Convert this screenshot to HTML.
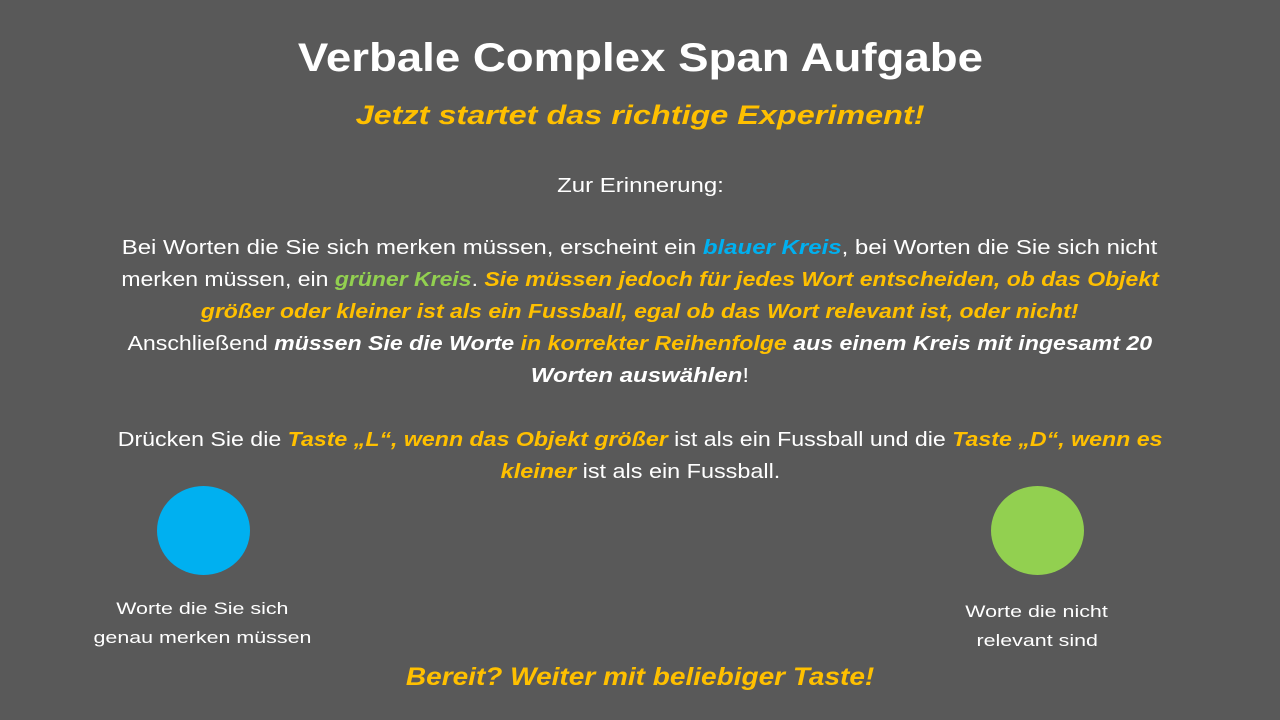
<!DOCTYPE html>
<html><head><meta charset="utf-8"><style>
body{margin:0;width:1280px;height:720px;background:#595959;overflow:hidden;font-family:"Liberation Sans",sans-serif;color:#fff;position:relative}
.l{position:absolute;left:0;width:1280px;text-align:center;white-space:nowrap}
.l>span{display:inline-block;transform-origin:center}
.b{font-size:20px;line-height:32px}
.b>span{transform:scaleX(1.2)}
.o{color:#FFC000}.bl{color:#00B0F0}.g{color:#92D050}
i{font-style:italic}b{font-weight:bold}
.c{position:absolute;border-radius:50%}
.s{position:absolute;text-align:center;font-size:17px;line-height:29px;white-space:nowrap}
.s>span{display:inline-block;transform:scaleX(1.26)}
</style></head><body>
<div class="l" style="top:32px;font-size:40px;font-weight:bold;line-height:52px"><span style="transform:scaleX(1.14)">Verbale Complex Span Aufgabe</span></div>
<div class="l o" style="top:96px;font-size:27px;font-weight:bold;font-style:italic;line-height:38px"><span style="transform:scaleX(1.2)">Jetzt startet das richtige Experiment!</span></div>
<div class="l b" style="top:170px"><span>Zur Erinnerung:</span></div>
<div class="l b" style="top:232px"><span>Bei Worten die Sie sich merken müssen, erscheint ein <b><i class="bl">blauer Kreis</i></b>, bei Worten die Sie sich nicht</span></div>
<div class="l b" style="top:264px"><span style="transform:scaleX(1.15)">merken müssen, ein <b><i class="g">grüner Kreis</i></b>. <b><i class="o">Sie müssen jedoch für jedes Wort entscheiden, ob das Objekt</i></b></span></div>
<div class="l b" style="top:296px"><span style="transform:scaleX(1.15)"><b><i class="o">größer oder kleiner ist als ein Fussball, egal ob das Wort relevant ist, oder nicht!</i></b></span></div>
<div class="l b" style="top:328px"><span style="transform:scaleX(1.157)">Anschließend <b><i>müssen Sie die Worte</i></b> <b><i class="o">in korrekter Reihenfolge</i></b> <b><i>aus einem Kreis mit ingesamt 20</i></b></span></div>
<div class="l b" style="top:360px"><span><b><i>Worten auswählen</i></b>!</span></div>
<div class="l b" style="top:424px"><span style="transform:scaleX(1.158)">Drücken Sie die <b><i class="o">Taste „L“, wenn das Objekt größer</i></b> ist als ein Fussball und die <b><i class="o">Taste „D“, wenn es</i></b></span></div>
<div class="l b" style="top:456px"><span style="transform:scaleX(1.17)"><b><i class="o">kleiner</i></b> ist als ein Fussball.</span></div>
<div class="c" style="left:157px;top:486px;width:93px;height:89px;background:#00B0F0"></div>
<div class="c" style="left:991px;top:486px;width:93px;height:89px;background:#92D050"></div>
<div class="s" style="left:72px;width:260px;top:594px"><span>Worte die Sie sich</span><br><span>genau merken müssen</span></div>
<div class="s" style="left:907px;width:260px;top:597px"><span>Worte die nicht</span><br><span>relevant sind</span></div>
<div class="l o" style="top:660px;font-size:25px;font-weight:bold;font-style:italic;line-height:34px"><span style="transform:scaleX(1.12)">Bereit? Weiter mit beliebiger Taste!</span></div>
</body></html>
